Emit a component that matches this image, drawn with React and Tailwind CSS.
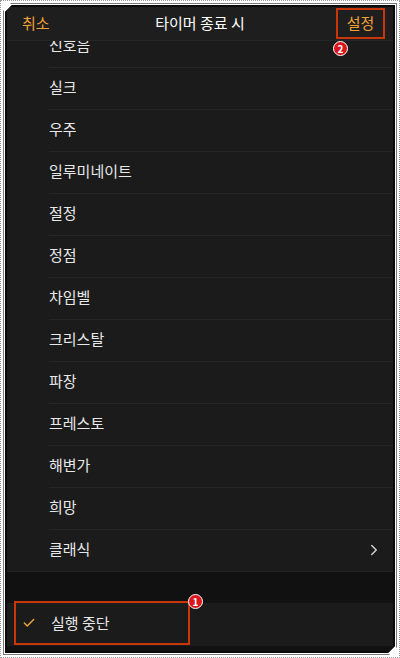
import { Check, ChevronRight } from "lucide-react";

const sounds = [
  "신호음",
  "실크",
  "우주",
  "일루미네이트",
  "절정",
  "정점",
  "차임벨",
  "크리스탈",
  "파장",
  "프레스토",
  "해변가",
  "희망",
];

function Badge({ n, className }) {
  return (
    <span
      className={
        "absolute flex h-[15px] w-[15px] items-center justify-center rounded-full border border-white bg-[#d8161b] text-[10px] font-bold leading-none text-white " +
        className
      }
    >
      {n}
    </span>
  );
}

export default function App() {
  return (
    <div
      className="h-[658px] w-[400px] border border-dotted border-[#9a9a9a] bg-white p-[2px]"
      style={{ fontFamily: '"Noto Sans CJK KR", "Noto Sans", sans-serif' }}
    >
      <div className="h-full border border-[#7a7a7a] bg-white p-px [clip-path:polygon(8px_0,100%_0,100%_calc(100%-8px),calc(100%-8px)_100%,0_100%,0_8px)]">
        <div className="relative flex h-full flex-col border-2 border-[#0a0a0a] bg-[#1b1b1b] [clip-path:polygon(7px_0,100%_0,100%_calc(100%-7px),calc(100%-7px)_100%,0_100%,0_7px)]">
          <div className="relative z-10 flex h-[34px] shrink-0 items-center justify-between border-b border-[#262626] bg-[#1e1e1e] px-[15px]">
            <span className="text-[15px] text-[#f0a23a]">취소</span>
            <span className="absolute left-1/2 -translate-x-1/2 text-[15px] text-white">
              타이머 종료 시
            </span>
            <span className="relative flex h-[31px] w-[49px] translate-x-[7px] items-center justify-center border-2 border-[#c8360a] text-[15px] text-[#f0a23a]">
              설정
            </span>
          </div>
          <Badge n="2" className="left-[326px] top-[34px] z-20" />

          <div className="flex-1 overflow-hidden">
            <div className="-mt-[15px]">
              {sounds.map((s) => (
                <div key={s} className="flex h-[42px] items-center pl-[42px]">
                  <div className="flex h-full flex-1 items-center border-b border-[#262626] pb-[2px] text-[15px] text-[#e8e8e8]">
                    {s}
                  </div>
                </div>
              ))}
              <div className="flex h-[42px] items-center border-b border-[#262626] pb-[2px] pl-[42px] pr-[10px] text-[15px] text-[#e8e8e8]">
                <span className="flex-1">클래식</span>
                <ChevronRight className="h-[18px] w-[18px] text-[#d0d0d0]" strokeWidth={2} />
              </div>
              <div className="h-[32px] border-b border-[#1e1e1e] bg-[#111111]" />
              <div className="relative flex h-[42px] items-center bg-[#1b1b1b]">
                <div className="ml-[7px] flex h-[44px] w-[176px] -translate-y-[2px] items-center border-2 border-[#c8360a] pl-[6px]">
                  <Check className="h-[14px] w-[14px] text-[#f0a23a]" strokeWidth={2.5} />
                  <span className="ml-[15px] text-[15px] text-[#e8e8e8]">실행 중단</span>
                </div>
                <Badge n="1" className="left-[181px] top-[-10px]" />
              </div>
              <div className="h-[10px] bg-[#111111]" />
            </div>
          </div>
        </div>
      </div>
    </div>
  );
}
